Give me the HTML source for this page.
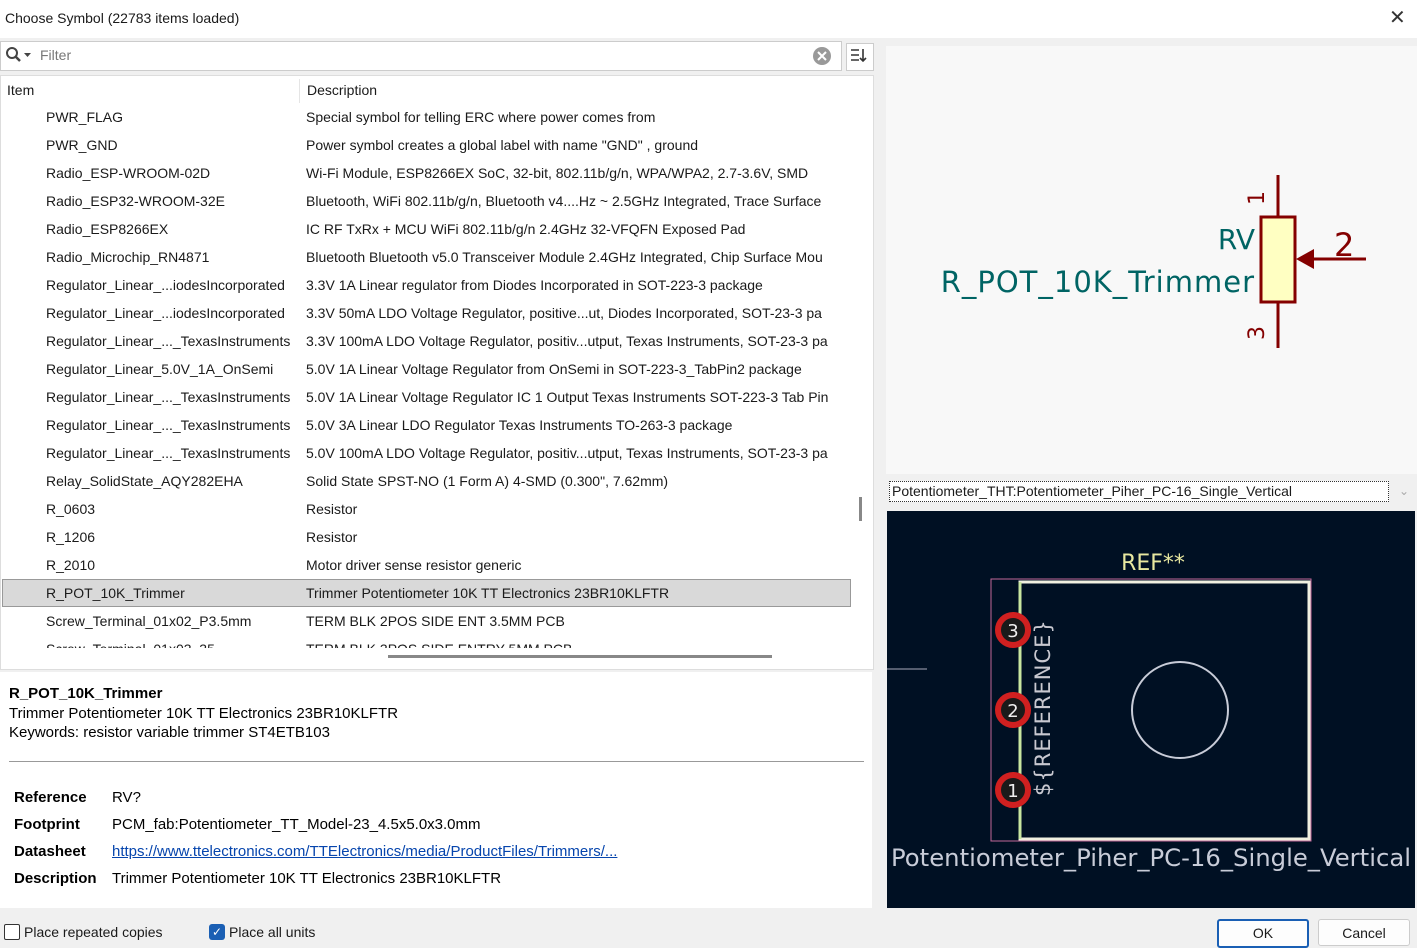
<!DOCTYPE html><html><head><style>
body{margin:0;width:1417px;height:947px;background:#f0f0f0;font-family:"Liberation Sans",sans-serif;font-size:14px;color:#1a1a1a;position:relative;overflow:hidden}
.a{position:absolute}
.row{position:absolute;left:1px;width:849px;height:28px;line-height:28px;white-space:nowrap;overflow:hidden}
.row span{position:absolute}
.row .i{left:44px}.row .d{left:304px}
</style></head><body>
<div class="a" style="left:0;top:0;width:1417px;height:38px;background:#fff"></div>
<div class="a" style="left:5px;top:10px;font-size:14px">Choose Symbol (22783 items loaded)</div>
<div class="a" style="left:1389px;top:5px;font-size:20px;color:#333">✕</div>
<div class="a" style="left:0;top:41px;width:840px;height:28px;background:#fff;border:1px solid #ccc"></div>
<svg class="a" style="left:5px;top:45px" width="30" height="20"><circle cx="7" cy="8" r="5" fill="none" stroke="#444" stroke-width="2"/><line x1="11" y1="12" x2="15" y2="16" stroke="#444" stroke-width="2.5"/><path d="M19 8h7l-3.5 4z" fill="#444"/></svg>
<div class="a" style="left:40px;top:47px;color:#777">Filter</div>
<svg class="a" style="left:812px;top:46px" width="20" height="20"><circle cx="10" cy="10" r="9" fill="#999"/><path d="M6 6l8 8M14 6l-8 8" stroke="#fff" stroke-width="2"/></svg>
<div class="a" style="left:846px;top:43px;width:26px;height:26px;background:#fff;border:1px solid #ccc"></div>
<svg class="a" style="left:850px;top:47px" width="18" height="18"><path d="M1 3h8M1 8h8M1 13h8M13 2v12M10 11l3 3 3-3" stroke="#333" stroke-width="1.6" fill="none"/></svg>
<div class="a" style="left:0;top:75px;width:872px;height:593px;background:#fff;border:1px solid #ddd"></div>
<div class="a" style="left:7px;top:82px">Item</div>
<div class="a" style="left:299px;top:79px;width:1px;height:24px;background:#e5e5e5"></div>
<div class="a" style="left:307px;top:82px">Description</div>
<div class="a" style="left:1px;top:103px;width:850px;height:545px;overflow:hidden">
<div class="row" style="top:0"><span class="i">PWR_FLAG</span><span class="d">Special symbol for telling ERC where power comes from</span></div>
<div class="row" style="top:28px"><span class="i">PWR_GND</span><span class="d">Power symbol creates a global label with name "GND" , ground</span></div>
<div class="row" style="top:56px"><span class="i">Radio_ESP-WROOM-02D</span><span class="d">Wi-Fi Module, ESP8266EX SoC, 32-bit, 802.11b/g/n, WPA/WPA2, 2.7-3.6V, SMD</span></div>
<div class="row" style="top:84px"><span class="i">Radio_ESP32-WROOM-32E</span><span class="d">Bluetooth, WiFi 802.11b/g/n, Bluetooth v4....Hz ~ 2.5GHz Integrated, Trace Surface</span></div>
<div class="row" style="top:112px"><span class="i">Radio_ESP8266EX</span><span class="d">IC RF TxRx + MCU WiFi 802.11b/g/n 2.4GHz 32-VFQFN Exposed Pad</span></div>
<div class="row" style="top:140px"><span class="i">Radio_Microchip_RN4871</span><span class="d">Bluetooth Bluetooth v5.0 Transceiver Module 2.4GHz Integrated, Chip Surface Mou</span></div>
<div class="row" style="top:168px"><span class="i">Regulator_Linear_...iodesIncorporated</span><span class="d">3.3V 1A Linear regulator from Diodes Incorporated in SOT-223-3 package</span></div>
<div class="row" style="top:196px"><span class="i">Regulator_Linear_...iodesIncorporated</span><span class="d">3.3V 50mA LDO Voltage Regulator,  positive...ut, Diodes Incorporated, SOT-23-3 pa</span></div>
<div class="row" style="top:224px"><span class="i">Regulator_Linear_..._TexasInstruments</span><span class="d">3.3V 100mA LDO Voltage Regulator,  positiv...utput, Texas Instruments, SOT-23-3 pa</span></div>
<div class="row" style="top:252px"><span class="i">Regulator_Linear_5.0V_1A_OnSemi</span><span class="d">5.0V 1A Linear Voltage Regulator from OnSemi in SOT-223-3_TabPin2 package</span></div>
<div class="row" style="top:280px"><span class="i">Regulator_Linear_..._TexasInstruments</span><span class="d">5.0V 1A Linear Voltage Regulator IC 1 Output Texas Instruments SOT-223-3 Tab Pin</span></div>
<div class="row" style="top:308px"><span class="i">Regulator_Linear_..._TexasInstruments</span><span class="d">5.0V 3A Linear LDO Regulator Texas Instruments TO-263-3 package</span></div>
<div class="row" style="top:336px"><span class="i">Regulator_Linear_..._TexasInstruments</span><span class="d">5.0V 100mA LDO Voltage Regulator,  positiv...utput, Texas Instruments, SOT-23-3 pa</span></div>
<div class="row" style="top:364px"><span class="i">Relay_SolidState_AQY282EHA</span><span class="d">Solid State SPST-NO (1 Form A) 4-SMD (0.300", 7.62mm)</span></div>
<div class="row" style="top:392px"><span class="i">R_0603</span><span class="d">Resistor</span></div>
<div class="row" style="top:420px"><span class="i">R_1206</span><span class="d">Resistor</span></div>
<div class="row" style="top:448px"><span class="i">R_2010</span><span class="d">Motor driver sense resistor generic</span></div>
<div class="row" style="top:476px;background:#d9d9d9;border:1px solid #999;box-sizing:border-box;line-height:26px"><span class="i" style="left:43px">R_POT_10K_Trimmer</span><span class="d" style="left:303px">Trimmer Potentiometer 10K TT Electronics 23BR10KLFTR</span></div>
<div class="row" style="top:504px"><span class="i">Screw_Terminal_01x02_P3.5mm</span><span class="d">TERM BLK 2POS SIDE ENT 3.5MM PCB</span></div>
<div class="row" style="top:532px"><span class="i">Screw_Terminal_01x03_35</span><span class="d">TERM BLK 3POS SIDE ENTRY 5MM PCB</span></div>
</div>
<div class="a" style="left:859px;top:497px;width:3px;height:24px;background:#888"></div>
<div class="a" style="left:388px;top:655px;width:384px;height:3px;background:#888"></div>
<div class="a" style="left:0;top:672px;width:872px;height:236px;background:#fff"></div>
<div class="a" style="left:9px;top:685px;font-size:15px;font-weight:bold;color:#000">R_POT_10K_Trimmer</div>
<div class="a" style="left:9px;top:704px;font-size:15px;color:#000;line-height:19px">Trimmer Potentiometer 10K TT Electronics 23BR10KLFTR<br>Keywords: resistor variable trimmer ST4ETB103</div>
<div class="a" style="left:9px;top:761px;width:855px;height:1px;background:#999"></div>
<div class="a" style="left:14px;top:784px;font-size:15px;font-weight:bold;line-height:27px;color:#000">Reference<br>Footprint<br>Datasheet<br>Description</div>
<div class="a" style="left:112px;top:784px;font-size:15px;line-height:27px;color:#000">RV?<br>PCM_fab:Potentiometer_TT_Model-23_4.5x5.0x3.0mm<br><span style="color:#0645ad;text-decoration:underline">https://www.ttelectronics.com/TTElectronics/media/ProductFiles/Trimmers/...</span><br>Trimmer Potentiometer 10K TT Electronics 23BR10KLFTR</div>
<div class="a" style="left:886px;top:46px;width:531px;height:428px;background:#f8f8f8"></div>
<svg class="a" style="left:886px;top:170px" width="531" height="190">
<g stroke="#840000" stroke-width="3" fill="none"><line x1="392" y1="5" x2="392" y2="47"/><line x1="392" y1="132" x2="392" y2="178"/><line x1="428" y1="89" x2="480" y2="89"/></g>
<rect x="375" y="47" width="34" height="85" fill="#ffffc2" stroke="#840000" stroke-width="3"/>
<path d="M410 89l18-10v20z" fill="#840000"/>
<text x="448" y="86" font-size="32" fill="#840000" font-family="DejaVu Sans">2</text>
<text x="0" y="0" font-size="22" fill="#840000" font-family="DejaVu Sans" transform="translate(378,35) rotate(-90)">1</text>
<text x="0" y="0" font-size="22" fill="#840000" font-family="DejaVu Sans" transform="translate(378,170) rotate(-90)">3</text>
<text x="369" y="79" font-size="28" fill="#006464" text-anchor="end" font-family="DejaVu Sans">RV</text>
<text x="369" y="122" font-size="29" fill="#006464" text-anchor="end" font-family="DejaVu Sans" letter-spacing="1">R_POT_10K_Trimmer</text>
</svg>
<div class="a" style="left:889px;top:481px;width:500px;height:21px;background:#fff;border:1px dotted #333;box-sizing:border-box;font-size:14px;line-height:19px;padding-left:2px">Potentiometer_THT:Potentiometer_Piher_PC-16_Single_Vertical</div>
<div class="a" style="left:1399px;top:484px;color:#aaa;font-size:12px">⌄</div>
<svg class="a" style="left:887px;top:511px" width="528" height="397">
<rect width="528" height="397" fill="#001023"/>
<line x1="0" y1="158" x2="40" y2="158" stroke="#aab" stroke-width="1"/>
<rect x="104" y="68" width="320" height="262" fill="none" stroke="#c2689a" stroke-width="1"/>
<rect x="133" y="71" width="289" height="257" fill="none" stroke="#f0f0e0" stroke-width="3"/>
<line x1="133" y1="71" x2="133" y2="328" stroke="#c8e6a0" stroke-width="3"/>
<circle cx="293" cy="199" r="48" fill="none" stroke="#c8ccd8" stroke-width="2"/>
<text x="266" y="59" font-size="22" fill="#e8e8a0" text-anchor="middle" font-family="DejaVu Sans">REF**</text>
<text transform="translate(163,285) rotate(-90)" font-size="21" fill="#c8c8d0" font-family="DejaVu Sans" letter-spacing="1">${REFERENCE}</text>
<g font-size="18" fill="#eee" text-anchor="middle" font-family="DejaVu Sans">
<circle cx="126" cy="119" r="15" fill="#1a1a1a" stroke="#d02020" stroke-width="6"/><text x="126" y="126">3</text>
<circle cx="126" cy="199" r="15" fill="#1a1a1a" stroke="#d02020" stroke-width="6"/><text x="126" y="206">2</text>
<circle cx="126" cy="279" r="15" fill="#1a1a1a" stroke="#d02020" stroke-width="6"/><text x="126" y="286">1</text>
</g>
<text x="4" y="355" font-size="24" fill="#c8ccd8" font-family="DejaVu Sans" textLength="520" lengthAdjust="spacingAndGlyphs">Potentiometer_Piher_PC-16_Single_Vertical</text>
</svg>
<div class="a" style="left:4px;top:924px;width:14px;height:14px;border:1px solid #333;background:#fff;border-radius:2px"></div>
<div class="a" style="left:24px;top:924px">Place repeated copies</div>
<div class="a" style="left:209px;top:924px;width:16px;height:16px;background:#1a5fb4;border-radius:3px;color:#fff;font-size:12px;text-align:center;line-height:16px">✓</div>
<div class="a" style="left:229px;top:924px">Place all units</div>
<div class="a" style="left:1217px;top:919px;width:88px;height:25px;border:2px solid #1a5fb4;background:#fdfdfd;text-align:center;line-height:25px;border-radius:3px">OK</div>
<div class="a" style="left:1318px;top:919px;width:90px;height:25px;border:1px solid #ccc;background:#fdfdfd;text-align:center;line-height:27px;border-radius:3px">Cancel</div>
</body></html>
